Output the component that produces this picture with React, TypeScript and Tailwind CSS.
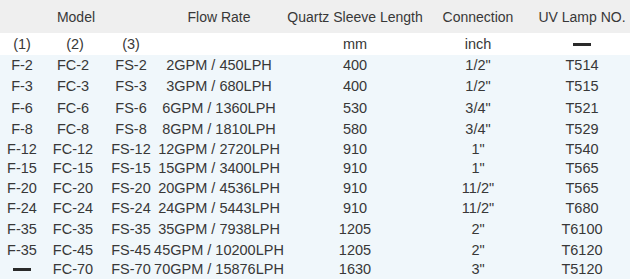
const rows: { h: string; c: string[] }[] = [
  { h: 'h-[21px]', c: ['F-2', 'FC-2', 'FS-2', '2GPM / 450LPH', '400', '1/2"', 'T514'] },
  { h: 'h-[21px]', c: ['F-3', 'FC-3', 'FS-3', '3GPM / 680LPH', '400', '1/2"', 'T515'] },
  { h: 'h-[22px]', c: ['F-6', 'FC-6', 'FS-6', '6GPM / 1360LPH', '530', '3/4"', 'T521'] },
  { h: 'h-[21px]', c: ['F-8', 'FC-8', 'FS-8', '8GPM / 1810LPH', '580', '3/4"', 'T529'] },
  { h: 'h-[19px]', c: ['F-12', 'FC-12', 'FS-12', '12GPM / 2720LPH', '910', '1"', 'T540'] },
  { h: 'h-[19px]', c: ['F-15', 'FC-15', 'FS-15', '15GPM / 3400LPH', '910', '1"', 'T565'] },
  { h: 'h-[20px]', c: ['F-20', 'FC-20', 'FS-20', '20GPM / 4536LPH', '910', '11/2"', 'T565'] },
  { h: 'h-[21px]', c: ['F-24', 'FC-24', 'FS-24', '24GPM / 5443LPH', '910', '11/2"', 'T680'] },
  { h: 'h-[21px]', c: ['F-35', 'FC-35', 'FS-35', '35GPM / 7938LPH', '1205', '2"', 'T6100'] },
  { h: 'h-[20px]', c: ['F-35', 'FC-45', 'FS-45', '45GPM / 10200LPH', '1205', '2"', 'T6120'] },
  { h: 'h-[19px]', c: ['-', 'FC-70', 'FS-70', '70GPM / 15876LPH', '1630', '3"', 'T5120'] },
]

const cols = 'grid grid-cols-[44px_58px_58px_118px_154px_92px_106px]'

function Dash() {
  return <span className="inline-block w-[18px] h-[3px] bg-[#2a2a2a]" />
}

function Cell({ v, i }: { v: string; i: number }) {
  return (
    <div className={`flex items-center justify-center whitespace-nowrap ${i === 6 ? 'pl-[10px]' : ''}`}>
      {v === '-' ? <Dash /> : v}
    </div>
  )
}

export default function App() {
  return (
    <div className="w-[630px] h-[279px] overflow-hidden text-[14.5px] text-[#383838] leading-none" style={{ fontFamily: '"Liberation Sans", Arial, sans-serif' }}>
      <div className={`${cols} h-[33px] bg-[#efefef] text-[14px] whitespace-nowrap`}>
        <div />
        <div className="flex items-center justify-center pl-[6px]">Model</div>
        <div />
        <div className="flex items-center justify-center">Flow Rate</div>
        <div className="flex items-center justify-center">Quartz Sleeve Length</div>
        <div className="flex items-center justify-center">Connection</div>
        <div className="flex items-center justify-center pl-[10px]">UV Lamp NO.</div>
      </div>
      <div className={`${cols} h-[22px] bg-white`}>
        <Cell v="(1)" i={0} />
        <div className="flex items-center justify-center pl-[4px]">(2)</div>
        <Cell v="(3)" i={2} />
        <div />
        <Cell v="mm" i={4} />
        <Cell v="inch" i={5} />
        <Cell v="-" i={6} />
      </div>
      <div className="bg-[#f0f7fb]">
        {rows.map((r, k) => (
          <div key={k} className={`${cols} ${r.h}`}>
            {r.c.map((v, i) => (
              <Cell key={i} v={v} i={i} />
            ))}
          </div>
        ))}
      </div>
    </div>
  )
}
